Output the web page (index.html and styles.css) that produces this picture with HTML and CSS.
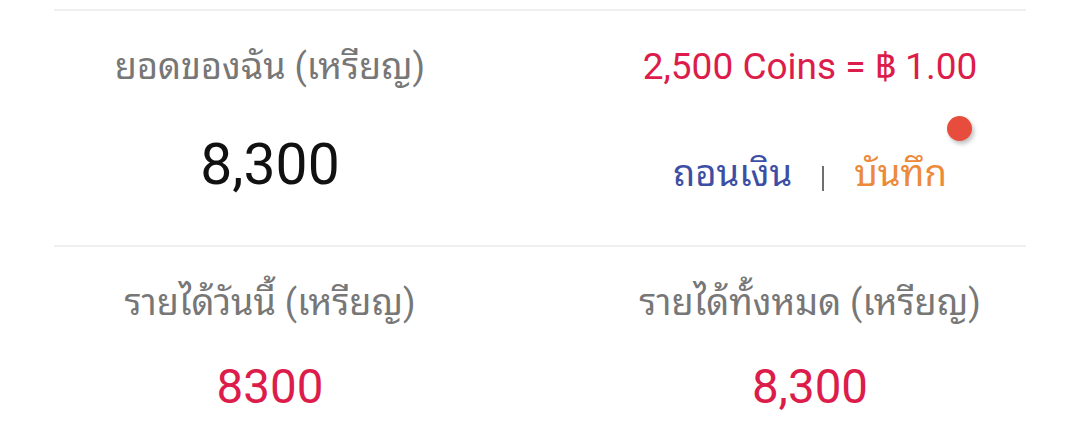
FILE: index.html
```html
<!DOCTYPE html>
<html lang="th">

<head>
    <meta charset="UTF-8">
    <meta name="viewport" content="width=device-width, initial-scale=1.0">
    <title>Coins</title>
    <link rel="stylesheet" href="styles.css">
</head>

<body>

    <div class="divider"></div>

    <div class="row top-row">
        <div class="cell">
            <div class="label">ยอดของฉัน (เหรียญ)</div>
            <div class="balance">8,300</div>
        </div>
        <div class="cell">
            <div class="rate">2,500 Coins = ฿ 1.00</div>
            <div class="actions">
                <a href="#" class="withdraw">ถอนเงิน</a>
                <span class="bar"></span>
                <a href="#" class="record">บันทึก</a>
                <span class="dot"></span>
            </div>
        </div>
    </div>

    <div class="divider"></div>

    <div class="row bottom-row">
        <div class="cell">
            <div class="label">รายได้วันนี้ (เหรียญ)</div>
            <div class="amount">8300</div>
        </div>
        <div class="cell">
            <div class="label">รายได้ทั้งหมด (เหรียญ)</div>
            <div class="amount">8,300</div>
        </div>
    </div>

</body>

</html>
```

FILE: styles.css
```css
body {
    font-family: Roboto, "Noto Sans Thai Looped", "Noto Sans Thai", "Noto Sans", sans-serif;
    background-color: #fff;
    margin: 0;
    padding: 0;
}

.divider {
    height: 2px;
    background-color: #efefef;
    margin: 0 54px;
}

.divider:first-child {
    margin-top: 9px;
}

.row {
    display: grid;
    grid-template-columns: 1fr 1fr;
}

.top-row {
    padding: 32px 0 48px;
}

.bottom-row {
    padding: 32px 0 8px;
}

.cell {
    display: flex;
    flex-direction: column;
    align-items: center;
}

.label {
    font-size: 36px;
    line-height: 48px;
    color: #777;
}

.rate {
    font-size: 37px;
    line-height: 48px;
    color: #dc1d4b;
}

.balance {
    font-size: 57px;
    line-height: 64px;
    color: #111;
    margin-top: 42px;
}

.amount {
    font-size: 47.5px;
    line-height: 64px;
    color: #dc1d4b;
    margin-top: 28px;
}

.actions {
    position: relative;
    display: flex;
    align-items: center;
    gap: 30px;
    margin-top: 54px;
    height: 48px;
    font-size: 36.5px;
}

.actions a {
    text-decoration: none;
}

.withdraw {
    color: #3d4fa4;
}

.record {
    color: #ec8a3a;
}

.bar {
    width: 2px;
    height: 25px;
    margin-top: 18px;
    background-color: #6f6f6f;
}

.dot {
    position: absolute;
    right: -25px;
    top: -29px;
    width: 25px;
    height: 25px;
    border-radius: 50%;
    background-color: #e74c3c;
    box-shadow: 2px 3px 4px rgba(0, 0, 0, 0.25);
}
```
